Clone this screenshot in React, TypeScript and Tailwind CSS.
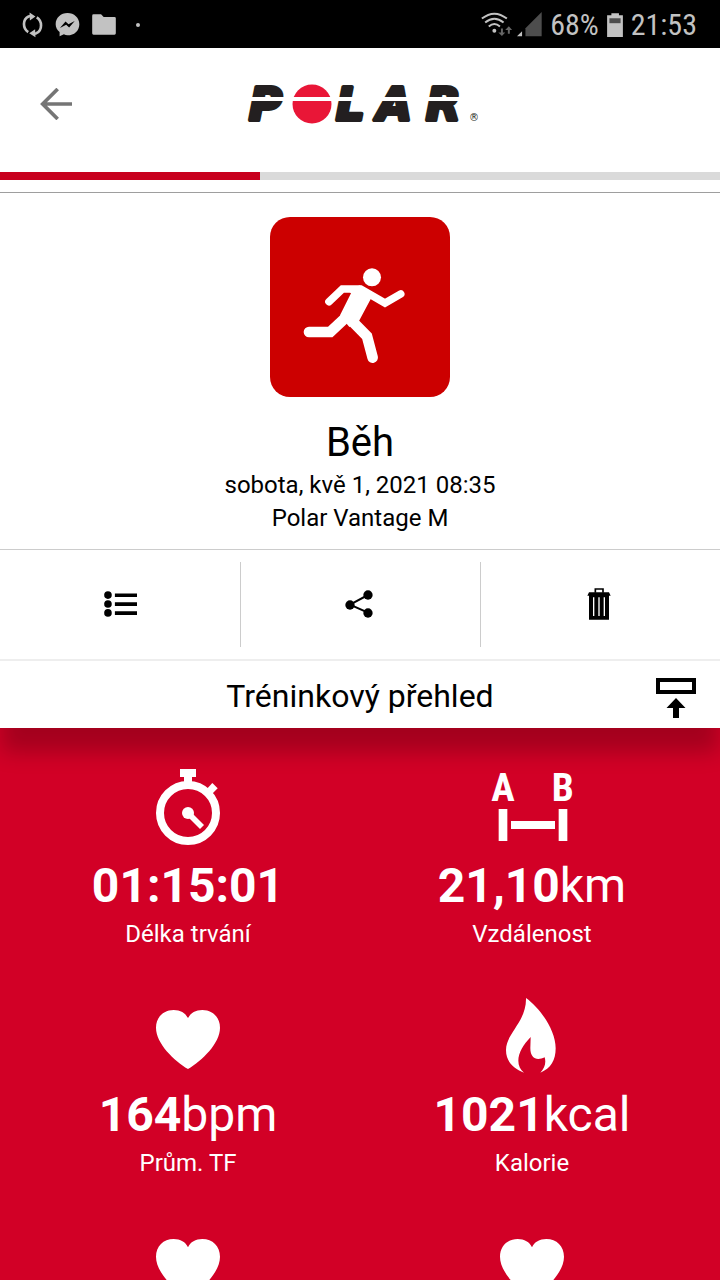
import type { ReactNode } from "react";

function SyncIcon() {
  return (
    <svg viewBox="64 36 64 78" className="h-[26px] w-[21px]" aria-hidden="true">
      <g fill="none" stroke="#c2c2c2" strokeWidth="8">
        <path d="M83 97C66 86 65 58 84 49L92 47" />
        <path d="M109 52C126 63 127 90 108 100L99 102" />
      </g>
      <path d="M87 37L105 49L88 61Z M104 88L86 100L105 112Z" fill="#c2c2c2" />
    </svg>
  );
}

function MessengerIcon() {
  return (
    <svg viewBox="166 38 76 74" className="h-[25px] w-[25px]" aria-hidden="true">
      <path d="M204 40C184 40 168 54 168 74C168 84 173 92 180 98V111L193 105C197 107 200 108 204 108C224 108 240 94 240 74C240 54 224 40 204 40Z" fill="#c2c2c2" />
      <path d="M181 86L198 66L207 74L226 64L209 84L200 76Z" fill="#000" />
    </svg>
  );
}

function FolderIcon() {
  return (
    <svg viewBox="276 42 72 64" className="h-[21px] w-6" aria-hidden="true">
      <path d="M280 43H303L311 51H344Q348 51 348 55V101Q348 105 344 105H280Q276 105 276 101V47Q276 43 280 43Z" fill="#c2c2c2" />
    </svg>
  );
}

function WifiIcon() {
  return (
    <svg viewBox="30 36 99 76" className="h-[25px] w-[33px]" aria-hidden="true">
      <g fill="none" stroke="#c2c2c2" strokeWidth="6">
        <path d="M35 56Q73 26 111 56" />
        <path d="M45 68Q73 45 101 68" />
        <path d="M56 80Q73 65 90 80" />
      </g>
      <circle cx="73" cy="93" r="6" fill="#c2c2c2" />
      <path d="M93 86H99V98H106L96 109L85 98H93Z M114 102H120V91H127L117 79L106 91H114Z" fill="#666" />
    </svg>
  );
}

function SignalIcon() {
  return (
    <svg viewBox="140 38 74 74" className="h-[25px] w-[25px]" aria-hidden="true">
      <path d="M165 110V86L213 38V110Z" fill="#4d4d4d" />
      <path d="M140 110L155 95V110Z" fill="#c2c2c2" />
    </svg>
  );
}

function BatteryIcon() {
  return (
    <svg viewBox="411 38 48 73" className="h-6 w-4" aria-hidden="true">
      <path d="M411 45H424V39H447V45H459V111H411Z" fill="#c2c2c2" />
      <path d="M418 54H452V69H418Z" fill="#4d4d4d" />
    </svg>
  );
}

function StatusBar() {
  return (
    <div className="flex h-12 shrink-0 items-center justify-between bg-black pt-px pr-[23px] pl-[22px] text-[#c2c2c2]">
      <div className="flex items-center gap-3">
        <SyncIcon />
        <MessengerIcon />
        <FolderIcon />
        <span className="ml-2 size-1 rounded-full bg-[#c2c2c2]" />
      </div>
      <div className="flex items-center gap-2 font-['Roboto_Condensed','Liberation_Sans_Narrow',Roboto,sans-serif] text-[30px] leading-9">
        <div className="flex items-center gap-1">
          <WifiIcon />
          <SignalIcon />
        </div>
        <span>68%</span>
        <BatteryIcon />
        <span>21:53</span>
      </div>
    </div>
  );
}

function PolarLogo() {
  return (
    <svg viewBox="240 72 240 64" className="h-16 w-60" role="img" aria-label="Polar">
      <g
        fill="#231f20"
        stroke="#231f20"
        strokeWidth="4"
        strokeLinejoin="round"
        fontFamily="'DejaVu Sans', sans-serif"
        fontWeight="700"
        fontStyle="italic"
        fontSize="45"
      >
        <text x="249" y="120">P</text>
        <text x="336" y="120">L</text>
        <text x="377" y="120">A</text>
        <text x="426" y="120">R</text>
      </g>
      <circle cx="312" cy="104" r="19.5" fill="#e91637" />
      <path d="M240 97H480V101H240Z" fill="#fff" />
      <text x="469" y="121" fontFamily="'DejaVu Sans', sans-serif" fontSize="10" fill="#231f20">®</text>
    </svg>
  );
}

function Header() {
  return (
    <header>
      <div className="grid h-[124px] grid-cols-[1fr_auto_1fr] items-start px-10 pt-6">
        <button type="button" aria-label="Zpět" className="flex h-16 w-8 items-center">
          <svg viewBox="120 264 96 96" className="size-8" fill="none" stroke="#757575" strokeWidth="11" aria-hidden="true">
            <path d="M216 312H128M173 267L128 312L173 357" />
          </svg>
        </button>
        <PolarLogo />
      </div>
      <div className="h-2 bg-[#dadada]">
        <div className="h-full w-[36.1%] bg-[#c8001e]" />
      </div>
    </header>
  );
}

function RunnerIcon() {
  return (
    <svg viewBox="30 21 540 540" className="size-[180px] rounded-[20px] bg-[#cc0000]" aria-hidden="true">
      <circle cx="336" cy="202" r="27" fill="#fff" />
      <path d="M262 240L300 226L335 262L297 333L268 351L240 316L273 250Z" fill="#fff" />
      <g fill="none" stroke="#fff" strokeLinecap="round">
        <path d="M207 275L247 237H302L375 279L422 252" strokeWidth="23" />
        <path d="M147 366H211L260 320" strokeWidth="32" />
        <path d="M270 327L321 379L338 443" strokeWidth="32" />
      </g>
    </svg>
  );
}

function ListIcon() {
  return (
    <svg viewBox="40 122 100 78" className="h-[26px] w-[33px]" aria-hidden="true">
      <circle cx="52" cy="134" r="11.5" />
      <circle cx="52" cy="161" r="11.5" />
      <circle cx="52" cy="188" r="11.5" />
      <path d="M73 129H140V140H73Z M73 156H140V167H73Z M73 183H140V194H73Z" />
    </svg>
  );
}

function ShareIcon() {
  return (
    <svg viewBox="765 119 84 84" className="size-7" aria-hidden="true">
      <circle cx="780" cy="164" r="14" />
      <circle cx="834" cy="134" r="14" />
      <circle cx="834" cy="188" r="14" />
      <path d="M834 134L780 163L834 187" fill="none" stroke="#000" strokeWidth="6" />
    </svg>
  );
}

function TrashIcon() {
  return (
    <svg viewBox="351 111 72 96" className="h-8 w-6" aria-hidden="true">
      <path d="M376 125V114H399V125" fill="none" stroke="#000" strokeWidth="5" />
      <path d="M357 124H417L422 134H417V206H357V134H352Z" />
      <path d="M369 139H373V195H369Z M385 139H389V195H385Z M401 139H405V195H401Z" fill="#fff" />
    </svg>
  );
}

function CollapseIcon() {
  return (
    <svg viewBox="0 0 40 40" className="size-10" aria-hidden="true">
      <path d="M2 2H38V14H2Z" fill="none" stroke="#000" strokeWidth="4" />
      <path d="M20 20L29.5 30H23V40H17V30H10.5Z" />
    </svg>
  );
}

function StopwatchIcon() {
  return (
    <svg viewBox="240 54 228 240" className="h-20 w-[76px]" aria-hidden="true">
      <circle cx="354" cy="189" r="84" fill="none" stroke="#fff" strokeWidth="24" />
      <path d="M330 57H378V81H366V98H342V81H330Z" fill="#fff" />
      <path d="M411 116L427 99L443 115L426 132Z" fill="#fff" />
      <circle cx="354" cy="189" r="18" fill="#fff" />
      <path d="M354 189L396 231" stroke="#fff" strokeWidth="17" />
    </svg>
  );
}

function DistanceIcon() {
  return (
    <svg viewBox="216 54 240 240" className="size-20 overflow-visible" aria-hidden="true">
      <g fill="#fff" fontFamily="'Roboto Condensed', 'Liberation Sans Narrow', Roboto, sans-serif" fontWeight="700" fontSize="118" textAnchor="middle">
        <text x="249" y="153">A</text>
        <text x="428" y="153">B</text>
      </g>
      <path d="M236 177H262V273H236Z M416 177H442V273H416Z M273 213H405V237H273Z" fill="#fff" />
    </svg>
  );
}

function HeartIcon() {
  return (
    <svg viewBox="234 51 240 240" className="size-20" aria-hidden="true">
      <path d="M354 267C312 242 258 190 258 143C258 112 280 90 311 90C331 90 347 99 354 115C361 99 377 90 397 90C428 90 450 112 450 143C450 190 396 242 354 267Z" fill="#fff" />
    </svg>
  );
}

function FlameIcon() {
  return (
    <svg viewBox="216 51 240 240" className="size-20" aria-hidden="true">
      <path d="M318 54C360 84 407 150 407 205C407 240 393 266 361 278C374 264 379 249 374 232C351 243 331 236 331 205L332 171C310 194 295 219 295 242C295 257 301 269 312 278C279 265 258 244 258 210C258 160 320 125 318 54Z" fill="#fff" />
    </svg>
  );
}

interface Stat {
  id: string;
  icon: ReactNode;
  value?: string;
  unit?: string;
  label?: string;
}

const stats: Stat[] = [
  { id: "duration", icon: <StopwatchIcon />, value: "01:15:01", label: "Délka trvání" },
  { id: "distance", icon: <DistanceIcon />, value: "21,10", unit: "km", label: "Vzdálenost" },
  { id: "hr-avg", icon: <HeartIcon />, value: "164", unit: "bpm", label: "Prům. TF" },
  { id: "calories", icon: <FlameIcon />, value: "1021", unit: "kcal", label: "Kalorie" },
  { id: "hr-left", icon: <HeartIcon /> },
  { id: "hr-right", icon: <HeartIcon /> },
];

function StatTile({ stat }: { stat: Stat }) {
  return (
    <div className="flex flex-col items-center">
      {stat.icon}
      {stat.value && (
        <p className="mt-[10px] text-5xl leading-[56px]">
          <strong className="font-bold">{stat.value}</strong>
          {stat.unit}
        </p>
      )}
      {stat.label && <p className="mt-1 text-2xl leading-8">{stat.label}</p>}
    </div>
  );
}

export default function App() {
  return (
    <div className="flex h-screen flex-col overflow-hidden bg-white font-[Roboto,sans-serif] text-black">
      <StatusBar />
      <Header />
      <main className="mt-3 flex min-h-0 flex-1 flex-col border-t border-[#9e9e9e]">
        <div className="relative shrink-0 bg-white shadow-[0_26px_20px_-2px_rgba(0,0,0,0.22)]">
          <section className="flex flex-col items-center pt-6 pb-[14px] text-center">
            <RunnerIcon />
            <h1 className="mt-[22px] text-[40px] leading-[48px]">Běh</h1>
            <p className="mt-0.5 text-2xl leading-[33px]">sobota, kvě 1, 2021 08:35</p>
            <p className="text-2xl leading-[33px]">Polar Vantage M</p>
          </section>
          <div className="grid grid-cols-3 border-t border-[#cccccc] py-3">
            <button type="button" aria-label="Seznam" className="flex h-[85px] items-center justify-center pb-0.5">
              <ListIcon />
            </button>
            <button type="button" aria-label="Sdílet" className="flex h-[85px] items-center justify-center border-l border-[#cccccc] pr-1 pb-0.5">
              <ShareIcon />
            </button>
            <button type="button" aria-label="Smazat" className="flex h-[85px] items-center justify-center border-l border-[#cccccc] pr-1 pb-0.5">
              <TrashIcon />
            </button>
          </div>
          <div className="grid h-[69px] grid-cols-[1fr_auto_1fr] items-center border-t-2 border-[#eeeeee] px-6 pt-0.5">
            <h2 className="col-start-2 text-[32px] leading-10">Tréninkový přehled</h2>
            <button type="button" aria-label="Sbalit" className="mt-1 justify-self-end">
              <CollapseIcon />
            </button>
          </div>
        </div>
        <section className="grid flex-1 grid-cols-2 content-start gap-y-[47px] overflow-hidden bg-[#d20026] px-4 pt-10 text-white">
          {stats.map((stat) => (
            <StatTile key={stat.id} stat={stat} />
          ))}
        </section>
      </main>
    </div>
  );
}
